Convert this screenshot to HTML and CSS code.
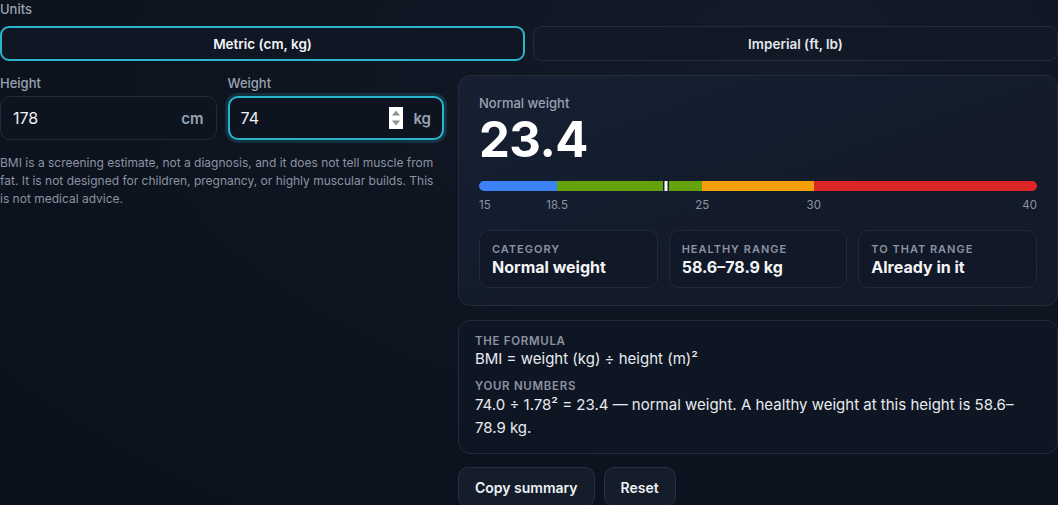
FILE: index.html
```html
<!DOCTYPE html>
<html lang="en">
<head>
<meta charset="utf-8">
<title>BMI Calculator</title>
<link rel="stylesheet" href="styles.css">
</head>
<body>
<div class="page">
  <div class="units-label">Units</div>
  <div class="toggle">
    <button class="seg active">Metric (cm, kg)</button>
    <button class="seg">Imperial (ft, lb)</button>
  </div>
  <div class="main">
    <div class="left">
      <div class="fields">
        <div class="field">
          <div class="field-label">Height</div>
          <div class="input">
            <span class="val">178</span>
            <span class="unit">cm</span>
          </div>
        </div>
        <div class="field">
          <div class="field-label">Weight</div>
          <div class="input focused">
            <span class="val">74</span>
            <span class="spin">
              <svg width="14" height="22" viewBox="0 0 14 22"><path d="M3 8.5 L7 3.5 L11 8.5 Z" fill="#8a8f99"/><path d="M3 13.5 L7 18.5 L11 13.5 Z" fill="#8a8f99"/></svg>
            </span>
            <span class="unit">kg</span>
          </div>
        </div>
      </div>
      <p class="note">BMI is a screening estimate, not a diagnosis, and it does not tell muscle from fat. It is not designed for children, pregnancy, or highly muscular builds. This is not medical advice.</p>
    </div>
    <div class="right">
      <section class="card result">
        <div class="result-label">Normal weight</div>
        <div class="bmi">23.4</div>
        <div class="bar">
          <span class="seg-b blue" style="width:14%"></span>
          <span class="seg-b green" style="width:26%"></span>
          <span class="seg-b orange" style="width:20%"></span>
          <span class="seg-b red" style="width:40%"></span>
          <span class="marker" style="left:33.6%"></span>
        </div>
        <div class="ticks">
          <span class="tick first" style="left:0%">15</span>
          <span class="tick" style="left:14%">18.5</span>
          <span class="tick" style="left:40%">25</span>
          <span class="tick" style="left:60%">30</span>
          <span class="tick last" style="left:100%">40</span>
        </div>
        <div class="stats">
          <div class="stat">
            <div class="stat-label">Category</div>
            <div class="stat-value">Normal weight</div>
          </div>
          <div class="stat">
            <div class="stat-label">Healthy range</div>
            <div class="stat-value">58.6–78.9 kg</div>
          </div>
          <div class="stat">
            <div class="stat-label">To that range</div>
            <div class="stat-value">Already in it</div>
          </div>
        </div>
      </section>
      <section class="card formula">
        <div class="f-label">The formula</div>
        <div class="f-text">BMI = weight (kg) ÷ height (m)²</div>
        <div class="f-label second">Your numbers</div>
        <div class="f-text numbers">74.0 ÷ 1.78² = 23.4 — normal weight. A healthy weight at this height is 58.6–78.9 kg.</div>
      </section>
      <div class="actions">
        <button class="btn">Copy summary</button>
        <button class="btn">Reset</button>
      </div>
    </div>
  </div>
</div>
</body>
</html>
```
FILE: styles.css
```css
* { box-sizing: border-box; }
html, body {
  margin: 0;
  height: 100%;
}
body {
  background: radial-gradient(ellipse at 75% 10%, #141b29 0%, #0e1420 45%, #0b111c 100%);
  color: #e5e7eb;
  font-family: Inter, "Noto Sans", sans-serif;
  overflow: hidden;
}
.page {
  width: 1058px;
}
.units-label {
  font-size: 13px;
  line-height: 18px;
  color: #9aa3b2;
  font-weight: 500;
}
.toggle {
  display: grid;
  grid-template-columns: 1fr 1fr;
  gap: 8px;
  margin-top: 8px;
}
.seg {
  height: 35px;
  border-radius: 9px;
  border: 1px solid #232c3b;
  background: #111826;
  color: #e5e7eb;
  font-family: inherit;
  font-size: 13.5px;
  font-weight: 600;
}
.seg.active {
  border: 2px solid #2bb5cc;
  background: #0f1624;
  color: #f3f4f6;
}
.main {
  display: grid;
  grid-template-columns: 444px 1fr;
  gap: 14px;
  margin-top: 14px;
}
.fields {
  display: grid;
  grid-template-columns: 1fr 1fr;
  gap: 11px;
}
.field-label {
  font-size: 13px;
  line-height: 17px;
  color: #9aa3b2;
  font-weight: 500;
  margin-bottom: 4px;
}
.input {
  height: 44px;
  border: 1px solid #212a39;
  border-radius: 10px;
  background: #0d1420;
  display: flex;
  align-items: center;
  padding: 0 12px;
}
.input.focused {
  border: 2px solid #2bb5cc;
  box-shadow: 0 0 0 3px rgba(43, 181, 204, 0.18);
  padding: 0 11px;
}
.val {
  flex: 1;
  font-size: 16px;
  color: #eef1f5;
}
.unit {
  font-size: 15px;
  font-weight: 600;
  color: #9aa3b2;
}
.spin {
  display: flex;
  background: #ffffff;
  margin-right: 10px;
  width: 14px;
  height: 22px;
}
.note {
  margin: 14px 0 0;
  font-size: 12px;
  line-height: 18px;
  color: #8b93a1;
}
.right {
  display: flex;
  flex-direction: column;
}
.card {
  border: 1px solid #222b3a;
  border-radius: 12px;
}
.result {
  background: linear-gradient(160deg, #162032 0%, #131b2a 60%, #121a28 100%);
  padding: 19px 20px 17px;
}
.result-label {
  font-size: 13px;
  line-height: 16px;
  color: #9aa3b2;
  font-weight: 500;
}
.bmi {
  font-size: 49px;
  line-height: 56px;
  font-weight: 700;
  letter-spacing: -0.01em;
  color: #ffffff;
  margin-top: 1px;
}
.bar {
  position: relative;
  display: flex;
  height: 10px;
  border-radius: 5px;
  overflow: hidden;
  margin-top: 13px;
}
.seg-b { height: 100%; }
.blue { background: #3b82f6; }
.green { background: #65a30d; }
.orange { background: #f59e0b; }
.red { background: #dc2626; }
.marker {
  position: absolute;
  top: 0;
  width: 3px;
  height: 100%;
  background: #ffffff;
  box-shadow: 0 0 0 1.5px #1a2232;
  transform: translateX(-50%);
}
.ticks {
  position: relative;
  height: 14px;
  margin-top: 7px;
  font-size: 11.5px;
  line-height: 14px;
  color: #8b93a1;
}
.tick {
  position: absolute;
  top: 0;
  transform: translateX(-50%);
}
.tick.first { transform: none; }
.tick.last { transform: translateX(-100%); }
.stats {
  display: grid;
  grid-template-columns: repeat(3, 1fr);
  gap: 11px;
  margin-top: 18px;
}
.stat {
  background: #111827;
  border: 1px solid #212a3a;
  border-radius: 10px;
  padding: 11px 12px 10px;
  height: 58px;
}
.stat-label {
  font-size: 11px;
  line-height: 14px;
  letter-spacing: 0.09em;
  text-transform: uppercase;
  font-weight: 600;
  color: #8b93a1;
}
.stat-value {
  font-size: 16px;
  line-height: 22px;
  font-weight: 700;
  color: #f3f4f6;
}
.formula {
  margin-top: 14px;
  background: #0f1623;
  padding: 13px 16px 14px;
}
.f-label {
  font-size: 11.5px;
  line-height: 14px;
  letter-spacing: 0.06em;
  text-transform: uppercase;
  font-weight: 600;
  color: #8b93a1;
}
.f-label.second { margin-top: 9px; }
.f-text {
  font-size: 15px;
  line-height: 22px;
  color: #e8ebf0;
}
.f-text.numbers {
  line-height: 23px;
}
.actions {
  display: flex;
  gap: 9px;
  margin-top: 13px;
}
.btn {
  height: 40px;
  padding: 0 16px;
  border-radius: 10px;
  border: 1px solid #263042;
  background: #151d2b;
  color: #eef1f5;
  font-family: inherit;
  font-size: 14px;
  font-weight: 600;
}
```
